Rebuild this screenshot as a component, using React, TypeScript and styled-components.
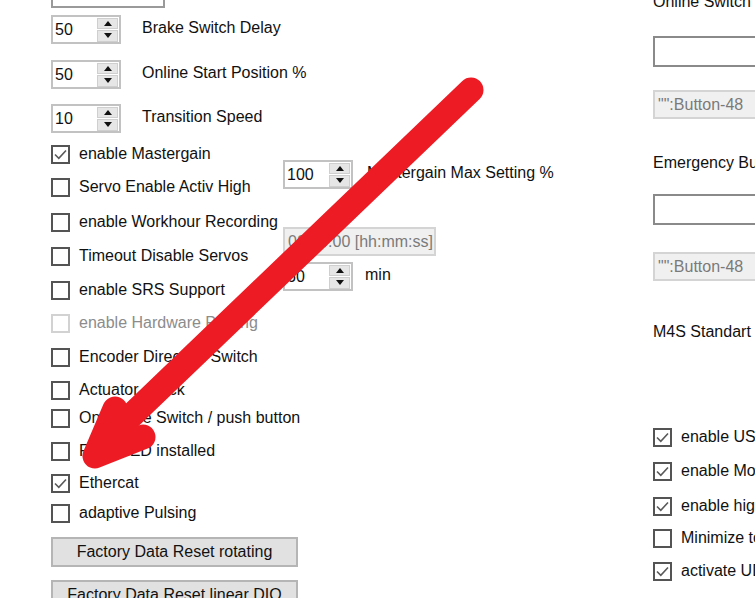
import React from 'react';
import styled, { createGlobalStyle } from 'styled-components';

const Global = createGlobalStyle`
  html, body { margin: 0; padding: 0; background: #fff; }
  body {
    width: 755px; height: 598px; overflow: hidden;
    font-family: "Liberation Sans", Arial, sans-serif;
    font-size: 16px; color: #111;
  }
`;

const Page = styled.div`
  position: relative;
  width: 755px;
  height: 598px;
  overflow: hidden;
  box-sizing: border-box;
  padding-left: 51px;
  display: grid;
  grid-template-columns: 232px 370px 1fr;
  background: #fff;
`;

const Column = styled.div`
  display: flex;
  flex-direction: column;
  align-items: flex-start;
  min-width: 0;
`;

const Gap = styled.div<{ $h: number }>`
  height: ${(p) => p.$h}px;
  flex: none;
`;

const TextBox = styled.div<{ $w: number; $h: number }>`
  width: ${(p) => p.$w}px;
  height: ${(p) => p.$h}px;
  box-sizing: border-box;
  border: 2px solid #8a8a8a;
  background: #fff;
  flex: none;
`;

const TopStub = styled(TextBox)`
  margin-top: -22px;
  border-color: #9a9a9a;
`;

const DisabledBox = styled.div<{ $w: number }>`
  width: ${(p) => p.$w}px;
  height: 29px;
  box-sizing: border-box;
  border: 2px solid #d4d4d4;
  background: #f0f0f0;
  color: #7a7a7a;
  padding-left: 3px;
  display: flex;
  align-items: center;
  white-space: nowrap;
  flex: none;
`;

const SpinRow = styled.div<{ $gap: number }>`
  display: flex;
  align-items: center;
  gap: ${(p) => p.$gap}px;
  white-space: nowrap;
  flex: none;
`;

const SpinField = styled.div`
  width: 70px;
  height: 29px;
  box-sizing: border-box;
  border: 2px solid #c2c2c2;
  background: #fff;
  display: flex;
  align-items: center;
  justify-content: space-between;
  padding: 0 1px 0 2px;
`;

const SpinValue = styled.span`
  line-height: 1;
`;

const SpinButtons = styled.div`
  width: 21px;
  height: 24px;
  display: flex;
  flex-direction: column;
  gap: 1px;
`;

const SpinHalf = styled.div`
  flex: 1;
  background: #e6e6e6;
  border: 1px solid #cfcfcf;
  display: flex;
  align-items: center;
  justify-content: center;
`;

const Label = styled.span`
  line-height: 18px;
  white-space: nowrap;
`;

const SpinLabel = styled(Label)`
  margin-bottom: 3px;
`;

const FieldLabel = styled.div`
  line-height: 18px;
  white-space: nowrap;
  flex: none;
`;

const TopFieldLabel = styled(FieldLabel)`
  margin-top: -7px;
`;

const CheckRow = styled.div<{ $disabled?: boolean }>`
  display: flex;
  align-items: center;
  gap: 9px;
  height: 20px;
  white-space: nowrap;
  color: ${(p) => (p.$disabled ? '#8c8c8c' : '#111')};
  flex: none;
`;

const CheckBoxBox = styled.span<{ $disabled?: boolean }>`
  width: 19px;
  height: 19px;
  box-sizing: border-box;
  border: 2px solid ${(p) => (p.$disabled ? '#d2d2d2' : '#545454')};
  background: #fff;
  display: flex;
  align-items: center;
  justify-content: center;
  flex: none;
`;

const Button = styled.div`
  width: 247px;
  height: 30px;
  box-sizing: border-box;
  border: 2px solid #b5b5b5;
  background: #e1e1e1;
  display: flex;
  align-items: center;
  justify-content: center;
  white-space: nowrap;
  flex: none;
`;

const Overlay = styled.svg`
  position: absolute;
  left: 0;
  top: 0;
  pointer-events: none;
`;

const Spin: React.FC<{ value: string; label: string; gap?: number }> = ({ value, label, gap = 21 }) => (
  <SpinRow $gap={gap}>
    <SpinField>
      <SpinValue>{value}</SpinValue>
      <SpinButtons>
        <SpinHalf>
          <svg width="8" height="5" viewBox="0 0 8 5"><path d="M0 5 L4 0 L8 5 Z" fill="#111" /></svg>
        </SpinHalf>
        <SpinHalf>
          <svg width="8" height="5" viewBox="0 0 8 5"><path d="M0 0 L8 0 L4 5 Z" fill="#111" /></svg>
        </SpinHalf>
      </SpinButtons>
    </SpinField>
    <SpinLabel>{label}</SpinLabel>
  </SpinRow>
);

const Check: React.FC<{ label: string; checked?: boolean; disabled?: boolean }> = ({ label, checked, disabled }) => (
  <CheckRow $disabled={disabled}>
    <CheckBoxBox $disabled={disabled}>
      {checked && (
        <svg width="15" height="15" viewBox="0 0 15 15">
          <path d="M2 7.5 L5.8 11.3 L13 3.5" fill="none" stroke="#5a5a5a" strokeWidth="1.6" />
        </svg>
      )}
    </CheckBoxBox>
    <Label>{label}</Label>
  </CheckRow>
);

export default function App() {
  return (
    <>
      <Global />
      <Page>
        <Column>
          <TopStub $w={114} $h={30} />
          <Gap $h={7} />
          <Spin value="50" label="Brake Switch Delay" />
          <Gap $h={16} />
          <Spin value="50" label="Online Start Position %" />
          <Gap $h={15} />
          <Spin value="10" label="Transition Speed" />
          <Gap $h={11} />
          <Check label="enable Mastergain" checked />
          <Gap $h={13} />
          <Check label="Servo Enable Activ High" />
          <Gap $h={15} />
          <Check label="enable Workhour Recording" />
          <Gap $h={14} />
          <Check label="Timeout Disable Servos" />
          <Gap $h={14} />
          <Check label="enable SRS Support" />
          <Gap $h={13} />
          <Check label="enable Hardware Pulsing" disabled />
          <Gap $h={14} />
          <Check label="Encoder Direction Switch" />
          <Gap $h={13} />
          <Check label="Actuator check" />
          <Gap $h={8} />
          <Check label="On Toggle Switch / push button" />
          <Gap $h={13} />
          <Check label="Front LED installed" />
          <Gap $h={12} />
          <Check label="Ethercat" checked />
          <Gap $h={10} />
          <Check label="adaptive Pulsing" />
          <Gap $h={14} />
          <Button>Factory Data Reset rotating</Button>
          <Gap $h={13} />
          <Button>Factory Data Reset linear DIO</Button>
        </Column>

        <Column>
          <Gap $h={160} />
          <Spin value="100" label="Mastergain Max Setting %" gap={14} />
          <Gap $h={38} />
          <DisabledBox $w={153}>00:00:00 [hh:mm:ss]</DisabledBox>
          <Gap $h={6} />
          <Spin value="60" label="min" gap={12} />
        </Column>

        <Column>
          <TopFieldLabel>Online Switch Code</TopFieldLabel>
          <Gap $h={25} />
          <TextBox $w={220} $h={31} />
          <Gap $h={23} />
          <DisabledBox $w={220}>"":Button-48</DisabledBox>
          <Gap $h={35} />
          <FieldLabel>Emergency Button Code</FieldLabel>
          <Gap $h={22} />
          <TextBox $w={220} $h={31} />
          <Gap $h={27} />
          <DisabledBox $w={220}>"":Button-48</DisabledBox>
          <Gap $h={42} />
          <FieldLabel>M4S Standart Config</FieldLabel>
          <Gap $h={86} />
          <Check label="enable USB Interface" checked />
          <Gap $h={14} />
          <Check label="enable Motor Control" checked />
          <Gap $h={15} />
          <Check label="enable high Resolution" checked />
          <Gap $h={12} />
          <Check label="Minimize to Tray" />
          <Gap $h={13} />
          <Check label="activate UDP Server" checked />
        </Column>

        <Overlay width="755" height="598" viewBox="0 0 755 598">
          <g fill="none" stroke="#ed1c24" strokeWidth="25" strokeLinecap="round" strokeLinejoin="round">
            <path d="M471 90 L108 438" />
            <path d="M115 409 L95 456 L143 437" />
          </g>
        </Overlay>
      </Page>
    </>
  );
}
